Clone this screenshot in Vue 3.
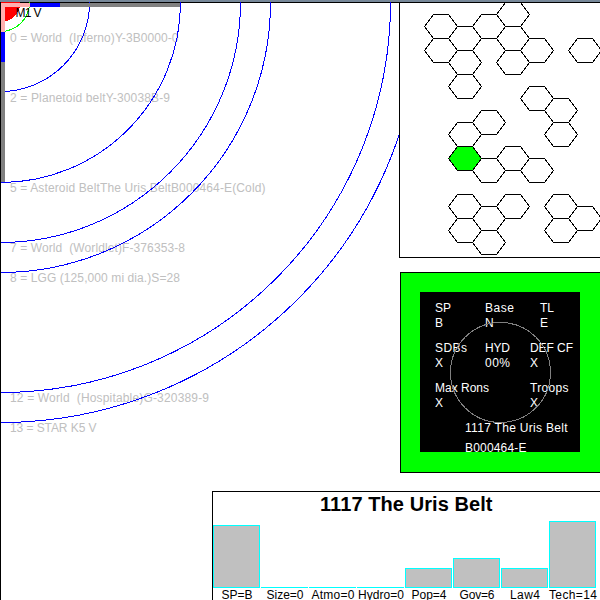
<script setup>
const orbits = [89, 180, 240, 270, 390, 420]

const orbitLabels = [
  { text: '0 = World  (Inferno)Y-3B0000-0', y: 42, w: 168.5 },
  { text: '2 = Planetoid beltY-30038B-9', y: 102, w: 160 },
  { text: '5 = Asteroid BeltThe Uris BeltB000464-E(Cold)', y: 192, w: 255.5 },
  { text: '7 = World  (Worldlet)F-376353-8', y: 252, w: 175 },
  { text: '8 = LGG (125,000 mi dia.)S=28', y: 282, w: 170 },
  { text: '12 = World  (Hospitable)G-320389-9', y: 402, w: 199 },
  { text: '13 = STAR K5 V', y: 432, w: 86.5 }
]

// [column, centre y, current?] of each sector hex
const cells = [
  [0, 26], [0, 50], [1, 38], [1, 62], [1, 86], [2, 26],
  [3, 14], [3, 38], [3, 62], [4, 50], [6, 50],
  [4, 98], [5, 110], [5, 134],
  [2, 122], [1, 134], [2, 170], [3, 158], [4, 170],
  [1, 206], [1, 230], [2, 218], [2, 242], [3, 206],
  [5, 206], [5, 230], [6, 218],
  [1, 158, true]
]

function hexPoints([col, cy]) {
  const x = 24.5 + col * 24
  const y = cy - 2.5
  return [
    [x, y], [x + 9, y - 12], [x + 24, y - 12],
    [x + 33, y], [x + 24, y + 12], [x + 9, y + 12]
  ].map((p) => p.join(',')).join(' ')
}

const stats = [
  { text: 'SP', x: 15, y: 20, w: 16 },
  { text: 'Base', x: 65, y: 20, w: 29 },
  { text: 'TL', x: 120, y: 20, w: 14 },
  { text: 'B', x: 15, y: 35, w: 8 },
  { text: 'N', x: 65, y: 35, w: 9 },
  { text: 'E', x: 120, y: 35, w: 8 },
  { text: 'SDBs', x: 15, y: 60, w: 32 },
  { text: 'HYD', x: 65, y: 60, w: 25 },
  { text: 'DEF CF', x: 110, y: 60, w: 43 },
  { text: 'X', x: 15, y: 75, w: 8 },
  { text: '00%', x: 65, y: 75, w: 25 },
  { text: 'X', x: 110, y: 75, w: 8 },
  { text: 'Max Rons', x: 15, y: 100, w: 54 },
  { text: 'Troops', x: 110, y: 100, w: 38.5 },
  { text: 'X', x: 15, y: 115, w: 8 },
  { text: 'X', x: 110, y: 115, w: 8 },
  { text: '1117 The Uris Belt', x: 45, y: 140, w: 102.5 },
  { text: 'B000464-E', x: 45, y: 160, w: 61.5 }
]

const bars = [
  { label: 'SP=B', h: 63, w: 31 },
  { label: 'Size=0', h: 1, w: 37 },
  { label: 'Atmo=0', h: 1, w: 43 },
  { label: 'Hydro=0', h: 1, w: 46 },
  { label: 'Pop=4', h: 20, w: 35 },
  { label: 'Gov=6', h: 30, w: 35 },
  { label: 'Law4', h: 20, w: 30 },
  { label: 'Tech=14', h: 67, w: 48 }
]
</script>

<template>
  <div class="screen">
    <div class="topline"></div>
    <div class="body">
      <svg class="system" viewBox="0 2 399 598" width="399" height="598">
        <text
          v-for="l in orbitLabels"
          :key="l.y"
          class="label"
          x="10"
          :y="l.y"
          :textLength="l.w"
          lengthAdjust="spacing"
        >{{ l.text }}</text>
        <g class="crisp">
          <circle v-for="r in orbits" :key="r" class="orbit" cx="0.5" cy="2.5" :r="r" />
          <circle class="star" cx="0.5" cy="2" r="20" />
          <circle class="habitable" cx="0.5" cy="2.5" r="29" />
          <rect class="cold" x="60" y="3" width="120" height="4" />
          <rect class="cold" x="1" y="62" width="4" height="120" />
          <rect class="mild" x="30" y="3" width="30" height="4" />
          <rect class="mild" x="1" y="32" width="4" height="30" />
          <rect class="hot" x="1" y="3" width="29" height="4" />
          <rect class="hot" x="1" y="3" width="4" height="29" />
          <rect x="0" y="2" width="1" height="598" />
        </g>
        <text class="star-name" x="15.5" y="17" textLength="26" lengthAdjust="spacing">M1 V</text>
      </svg>

      <div class="side">
        <svg class="map" viewBox="0 0 200 254">
          <polygon
            v-for="(c, i) in cells"
            :key="i"
            :class="['hex', { current: c[2] }]"
            :points="hexPoints(c)"
          />
        </svg>
        <div class="world">
          <svg class="stats" viewBox="0 0 160 160" width="160" height="160">
            <text
              v-for="(s, i) in stats"
              :key="i"
              :x="s.x"
              :y="s.y"
              :textLength="s.w"
              lengthAdjust="spacing"
            >{{ s.text }}</text>
            <circle class="globe" cx="80.5" cy="80.5" r="50" />
          </svg>
        </div>
      </div>

      <div class="chart">
        <svg class="title" viewBox="0 0 387 27" width="387" height="27">
          <text x="107" y="19" textLength="172.5" lengthAdjust="spacing">1117 The Uris Belt</text>
        </svg>
        <div class="bars">
          <div v-for="b in bars" :key="b.label" class="col">
            <div :class="['bar', { flat: b.h === 1 }]" :style="{ height: b.h + 'px' }"></div>
            <svg class="caption" viewBox="0 0 50 12" width="50" height="12">
              <text x="25" y="11" text-anchor="middle" :textLength="b.w" lengthAdjust="spacing">{{ b.label }}</text>
            </svg>
          </div>
        </div>
      </div>
    </div>
  </div>
</template>

<style>
body {
  margin: 0;
  overflow: hidden;
}
</style>

<style scoped>
.screen {
  width: 600px;
  height: 600px;
  overflow: hidden;
  background: #fff;
  font-family: "Liberation Sans", Arial, sans-serif;
  font-size: 12px;
}
.topline {
  height: 2px;
  background: #778899;
  border-bottom: 1px solid #000;
}
.body {
  display: grid;
  grid-template-columns: 212px 187px 201px;
  grid-template-rows: 488px 109px;
}
svg {
  display: block;
}
text {
  white-space: pre;
}
.system {
  grid-column: 1 / 3;
  grid-row: 1 / 3;
  margin-top: -1px;
}
.crisp,
.hex,
.globe {
  shape-rendering: crispEdges;
}
.orbit {
  fill: none;
  stroke: #0000ff;
}
.star {
  fill: #ff0000;
}
.habitable {
  fill: none;
  stroke: #00ff00;
}
.cold {
  fill: #808080;
}
.mild {
  fill: #0000ff;
}
.hot {
  fill: #ffafaf;
}
.label {
  fill: #c0c0c0;
}
.side {
  grid-column: 3;
  grid-row: 1;
  display: flex;
  flex-direction: column;
  gap: 14px;
}
.map {
  box-sizing: border-box;
  flex: none;
  width: 201px;
  height: 255px;
  border-left: 1px solid #000;
  border-bottom: 1px solid #000;
}
.hex {
  fill: none;
  stroke: #000;
}
.current {
  fill: #00ff00;
}
.world {
  margin-left: 1px;
  padding: 19px;
  height: 161px;
  border: 1px solid #000;
  border-right: 0;
  background: #00ff00;
}
.stats {
  background: #000;
}
.stats text {
  fill: #fff;
}
.globe {
  fill: none;
  stroke: #808080;
}
.chart {
  grid-column: 2 / 4;
  grid-row: 2;
  border-top: 1px solid #000;
  border-left: 1px solid #000;
  background: #fff;
  z-index: 1;
}
.title text {
  font-size: 20px;
  font-weight: bold;
}
.bars {
  display: flex;
  gap: 1px;
  height: 81px;
}
.col {
  width: 47px;
  flex: none;
  display: flex;
  flex-direction: column;
  justify-content: flex-end;
}
.bar {
  box-sizing: border-box;
  border: 1px solid #00ffff;
  background: #c0c0c0;
}
.flat {
  border-bottom: 0;
}
.caption {
  margin-left: -1px;
  overflow: visible;
}
</style>
